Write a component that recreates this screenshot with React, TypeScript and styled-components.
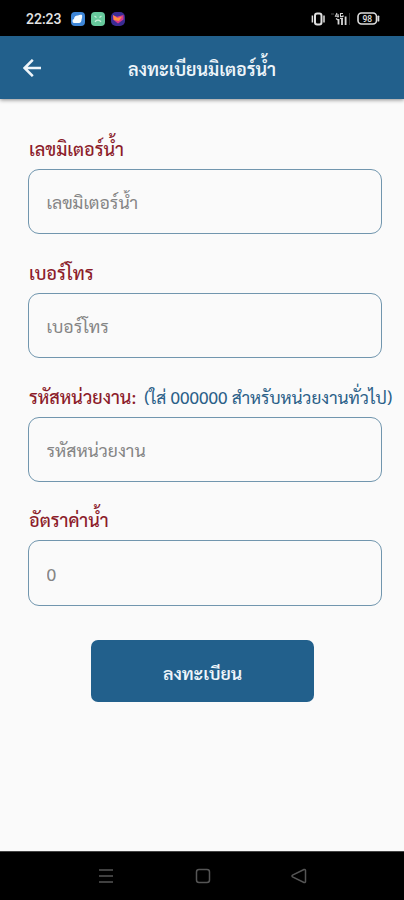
import React from 'react';
import styled, { createGlobalStyle } from 'styled-components';

const GlobalStyle = createGlobalStyle`
  *, *::before, *::after { box-sizing: border-box; }
  body { margin: 0; background: #fafafa; }
`;

const Screen = styled.div`
  height: 900px;
  display: flex;
  flex-direction: column;
  overflow: hidden;
  background: #fafafa;
  font-family: Sarabun, "Noto Sans Thai Looped", "Noto Sans", sans-serif;
`;

const StatusBar = styled.div`
  flex: none;
  height: 36px;
  padding: 1px 24px 0 26px;
  display: flex;
  align-items: center;
  justify-content: space-between;
  background: #000;
  color: #e4e4e4;
`;

const StatusGroup = styled.div<{ $gap: number }>`
  display: flex;
  align-items: center;
  gap: ${(p) => p.$gap}px;
  svg { display: block; }
`;

const Clock = styled.span`
  width: 38px;
  margin-right: 1px;
  font: 500 14px/20px Roboto, sans-serif;
`;

const AppBar = styled.header`
  flex: none;
  height: 63px;
  display: grid;
  grid-template-columns: 64px 1fr 64px;
  align-items: center;
  background: #22608c;
  color: #eef5fa;
  box-shadow: 0 1px 4px rgba(0, 0, 0, 0.45);
  z-index: 1;
`;

const BackButton = styled.button`
  height: 48px;
  padding: 1px 0 0;
  border: 0;
  background: none;
  color: inherit;
  display: grid;
  place-items: center;
`;

const Title = styled.h1`
  margin: 0;
  padding-top: 3px;
  font-size: 17.9px;
  line-height: 28px;
  font-weight: 600;
  text-align: center;
  white-space: nowrap;
`;

const Form = styled.form`
  flex: 1;
  padding: 36px 0 0 28px;
  display: flex;
  flex-direction: column;
`;

const Field = styled.div`
  height: 123.8px;
  flex: none;
`;

const Label = styled.label`
  display: block;
  height: 34px;
  padding-left: 1px;
  font-size: 18px;
  line-height: 28px;
  font-weight: 500;
  color: #8c1c2a;
  white-space: nowrap;
`;

const Hint = styled.span`
  margin-left: 8px;
  color: #2a6088;
  font-size: 17.3px;
  font-weight: 400;
`;

const Input = styled.input`
  display: block;
  width: 354px;
  height: 65.4px;
  padding: 0 17.500px;
  border: 1.3px solid #7196ae;
  border-radius: 11px;
  background: transparent;
  outline: none;
  font-family: inherit;
  font-size: 17.6px;
  line-height: 40px;
  color: #858585;
  &::placeholder {
    color: #858585;
    opacity: 1;
    line-height: 40px;
  }
`;

const Submit = styled.button`
  width: 223px;
  height: 62px;
  margin: 10px 0 0 63px;
  padding: 2px 0 0;
  border: 0;
  border-radius: 7px;
  background: #22608c;
  color: #eef5fa;
  font-family: inherit;
  font-size: 17.7px;
  font-weight: 600;
`;

const NavBar = styled.nav`
  flex: none;
  height: 49px;
  padding: 0 97px 0 98px;
  display: flex;
  align-items: center;
  justify-content: space-between;
  border-top: 1px solid #444;
  background: #000;
  color: #555;
  svg { display: block; }
`;

const fields = [
  { label: 'เลขมิเตอร์น้ำ', placeholder: 'เลขมิเตอร์น้ำ' },
  { label: 'เบอร์โทร', placeholder: 'เบอร์โทร' },
  { label: 'รหัสหน่วยงาน:', hint: '(ใส่ 000000 สำหรับหน่วยงานทั่วไป)', placeholder: 'รหัสหน่วยงาน' },
  { label: 'อัตราค่าน้ำ', placeholder: '0' },
];

const WeatherIcon = () => (
  <svg width="14" height="14" viewBox="0 0 14 14">
    <rect width="14" height="14" rx="4" fill="#3d86d8" />
    <path d="M4 11a2 2 0 0 1-1-4A3.500 3.500 0 0 1 7 3.500c1.200-.8 3.200-1 4-.4.3 1 .2 3-.4 4.200 0 2.200-1 3.700-2.600 3.700z" fill="#f4fbff" />
  </svg>
);

const ChatIcon = () => (
  <svg width="14" height="14" viewBox="0 0 14 14">
    <rect width="14" height="14" rx="4" fill="#66c99c" />
    <path d="M3.500 4l2 1.500M10.500 4l-2 1.500M4 10c1-2.500 5-2.500 6 0" fill="none" stroke="#c4efd9" strokeWidth="1.200" />
  </svg>
);

const HeartIcon = () => (
  <svg width="14" height="14" viewBox="0 0 14 14">
    <rect width="14" height="14" rx="5" fill="#3b2c93" />
    <path d="M7 11.500L2 7.500V3.200l4 1.500L12.500 3v4.500z" fill="#d63a8c" />
    <path d="M2 3l4.500 3L11 4.500 8 9 3 8z" fill="#ff8f3d" />
  </svg>
);

const VibrateIcon = () => (
  <svg width="14" height="14" viewBox="0 0 14 14" fill="none" stroke="#e0e0e0">
    <rect x="4" y="1.600" width="6.500" height="10.800" rx="2.200" strokeWidth="2" />
    <path d="M1.400 3.500v7M13 3.500v7" strokeWidth="1.500" />
  </svg>
);

const SignalIcon = () => (
  <svg width="20" height="14" viewBox="0 0 20 14" fill="none" stroke="#d6d6d6">
    <path d="M0 2h3" stroke="#555" />
    <path d="M6 1L4.500 4.200H8M7 2v3.500M12 1.500H9.500v3H12V3.200" strokeWidth="1.100" />
    <path d="M7.500 7v5.500M11 6v7M14.600 4.500v8.500" strokeWidth="1.800" />
    <path d="M5 6.500l2 1.500M9 6.300h3" strokeWidth="1.200" />
    <path d="M18.500 1v12" stroke="#333" />
  </svg>
);

const BatteryIcon = () => (
  <svg width="23" height="13" viewBox="0 0 23 13" fill="none">
    <rect x="1" y="1" width="18.500" height="11" rx="3.500" stroke="#dedede" strokeWidth="1.600" />
    <path d="M21.400 4.300v4.400" stroke="#dedede" strokeWidth="1.800" strokeLinecap="round" />
    <text x="10.300" y="9.700" textAnchor="middle" fontFamily="Roboto, sans-serif" fontWeight="500" fontSize="8.500" fill="#e2e2e2">98</text>
  </svg>
);

export default function App() {
  return (
    <Screen>
      <GlobalStyle />
      <StatusBar>
        <StatusGroup $gap={6}>
          <Clock>22:23</Clock>
          <WeatherIcon />
          <ChatIcon />
          <HeartIcon />
        </StatusGroup>
        <StatusGroup $gap={6}>
          <VibrateIcon />
          <SignalIcon />
          <BatteryIcon />
        </StatusGroup>
      </StatusBar>
      <AppBar>
        <BackButton type="button" aria-label="Back">
          <svg width="18" height="18" viewBox="0 0 18 18" fill="none" stroke="currentColor" strokeWidth="2.500">
            <path d="M9.800 .8L1.600 9l8.200 8.200M1.600 9H18" />
          </svg>
        </BackButton>
        <Title>ลงทะเบียนมิเตอร์น้ำ</Title>
      </AppBar>
      <Form>
        {fields.map((f, i) => (
          <Field key={f.label}>
            <Label htmlFor={`field-${i}`}>
              {f.label}
              {f.hint && <Hint>{f.hint}</Hint>}
            </Label>
            <Input id={`field-${i}`} placeholder={f.placeholder} />
          </Field>
        ))}
        <Submit type="button">ลงทะเบียน</Submit>
      </Form>
      <NavBar>
        <svg width="16" height="16" viewBox="0 0 16 16" stroke="currentColor" strokeWidth="1.600">
          <path d="M1 2h14M1 8h14M1 14h14" />
        </svg>
        <svg width="16" height="16" viewBox="0 0 16 16" fill="none" stroke="currentColor" strokeWidth="1.500">
          <rect x="1.500" y="1.500" width="13" height="13" rx="2.500" />
        </svg>
        <svg width="16" height="16" viewBox="0 0 16 16" fill="none" stroke="currentColor" strokeWidth="1.500" strokeLinejoin="round">
          <path d="M1.500 7.200L13 1.500q1.500-.4 1.500 1v11q0 1.400-1.500 1L1.500 8.800q-1-.8 0-1.600z" />
        </svg>
      </NavBar>
    </Screen>
  );
}
